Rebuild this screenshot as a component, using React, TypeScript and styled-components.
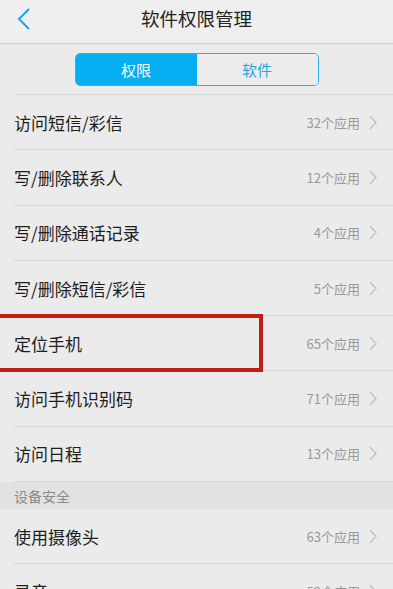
import React, { useState } from "react";
import styled, { createGlobalStyle } from "styled-components";

const GlobalStyle = createGlobalStyle`
  html, body {
    margin: 0;
    padding: 0;
    overflow: hidden;
    background: #ebebeb;
  }
  * { box-sizing: border-box; }
`;

const Page = styled.div`
  width: 393px;
  height: 589px;
  overflow: hidden;
  background: #ebebeb;
  font-family: "Noto Sans CJK SC", "Noto Sans", sans-serif;
`;

const Header = styled.div`
  position: relative;
  display: flex;
  align-items: center;
  justify-content: center;
  height: 44px;
  background: #efefef;
  border-bottom: 1px solid #cfcfcf;
`;

const BackButton = styled.button`
  position: absolute;
  left: 12px;
  top: 6px;
  width: 24px;
  height: 26px;
  padding: 0;
  border: none;
  background: transparent;
  display: flex;
  align-items: center;
  justify-content: center;
`;

const Title = styled.div`
  font-size: 18.5px;
  color: #222;
  margin-top: -8px;
`;

const TabBar = styled.div`
  display: flex;
  justify-content: center;
  padding: 9px 0 8px;
  margin-left: 14px;
  border-bottom: 1px solid #d8d8d8;
`;

const Segment = styled.div`
  display: flex;
  width: 244px;
  height: 33px;
  border: 1.5px solid #2bb0e6;
  border-radius: 5px;
  overflow: hidden;
  margin-left: -14px;
`;

const SegmentItem = styled.div<{ $active: boolean }>`
  flex: 1;
  display: flex;
  align-items: center;
  justify-content: center;
  font-size: 15px;
  background: ${(p) => (p.$active ? "#06aef2" : "#ececec")};
  color: ${(p) => (p.$active ? "#ffffff" : "#1ea6e2")};
`;

const Row = styled.div`
  position: relative;
  display: flex;
  align-items: center;
  height: 55.3px;
  margin-left: 14px;
  padding-right: 16px;
  border-bottom: 1px solid #d8d8d8;
`;

const RowLabel = styled.div`
  flex: 1;
  font-size: 17px;
  color: #1e1e1e;
`;

const RowCount = styled.div`
  font-size: 13px;
  color: #999999;
  margin-right: 9px;
`;

const Highlight = styled.div`
  position: absolute;
  left: -18px;
  top: -2px;
  width: 267px;
  height: 58px;
  border: 4px solid #c01f18;
  pointer-events: none;
`;

const SectionHeader = styled.div`
  display: flex;
  align-items: center;
  height: 27px;
  padding-left: 14px;
  background: #e2e2e2;
  font-size: 14px;
  color: #8a8a8a;
`;

const Chevron = () => (
  <svg width="8" height="15" viewBox="0 0 8 15">
    <path d="M1 1 L7 7.5 L1 14" fill="none" stroke="#c2c2c2" strokeWidth="1.4" />
  </svg>
);

const groupA = [
  { name: "访问短信/彩信", count: 32 },
  { name: "写/删除联系人", count: 12 },
  { name: "写/删除通话记录", count: 4 },
  { name: "写/删除短信/彩信", count: 5 },
  { name: "定位手机", count: 65, mark: true },
  { name: "访问手机识别码", count: 71 },
  { name: "访问日程", count: 13 },
];

const groupB = [
  { name: "使用摄像头", count: 63 },
  { name: "录音", count: 52 },
];

type Item = { name: string; count: number; mark?: boolean };

const PermissionRow: React.FC<{ item: Item }> = ({ item }) => (
  <Row>
    <RowLabel>{item.name}</RowLabel>
    <RowCount>{item.count}个应用</RowCount>
    <Chevron />
    {item.mark && <Highlight />}
  </Row>
);

const App: React.FC = () => {
  const [tab, setTab] = useState(0);

  return (
    <>
      <GlobalStyle />
      <Page>
        <Header>
          <BackButton>
            <svg width="14" height="22" viewBox="0 0 14 22">
              <path d="M12 1 L2 11 L12 21" fill="none" stroke="#1ba5e6" strokeWidth="2" />
            </svg>
          </BackButton>
          <Title>软件权限管理</Title>
        </Header>
        <TabBar>
          <Segment>
            <SegmentItem $active={tab === 0} onClick={() => setTab(0)}>权限</SegmentItem>
            <SegmentItem $active={tab === 1} onClick={() => setTab(1)}>软件</SegmentItem>
          </Segment>
        </TabBar>
        {groupA.map((item) => (
          <PermissionRow key={item.name} item={item} />
        ))}
        <SectionHeader>设备安全</SectionHeader>
        {groupB.map((item) => (
          <PermissionRow key={item.name} item={item} />
        ))}
      </Page>
    </>
  );
};

export default App;
